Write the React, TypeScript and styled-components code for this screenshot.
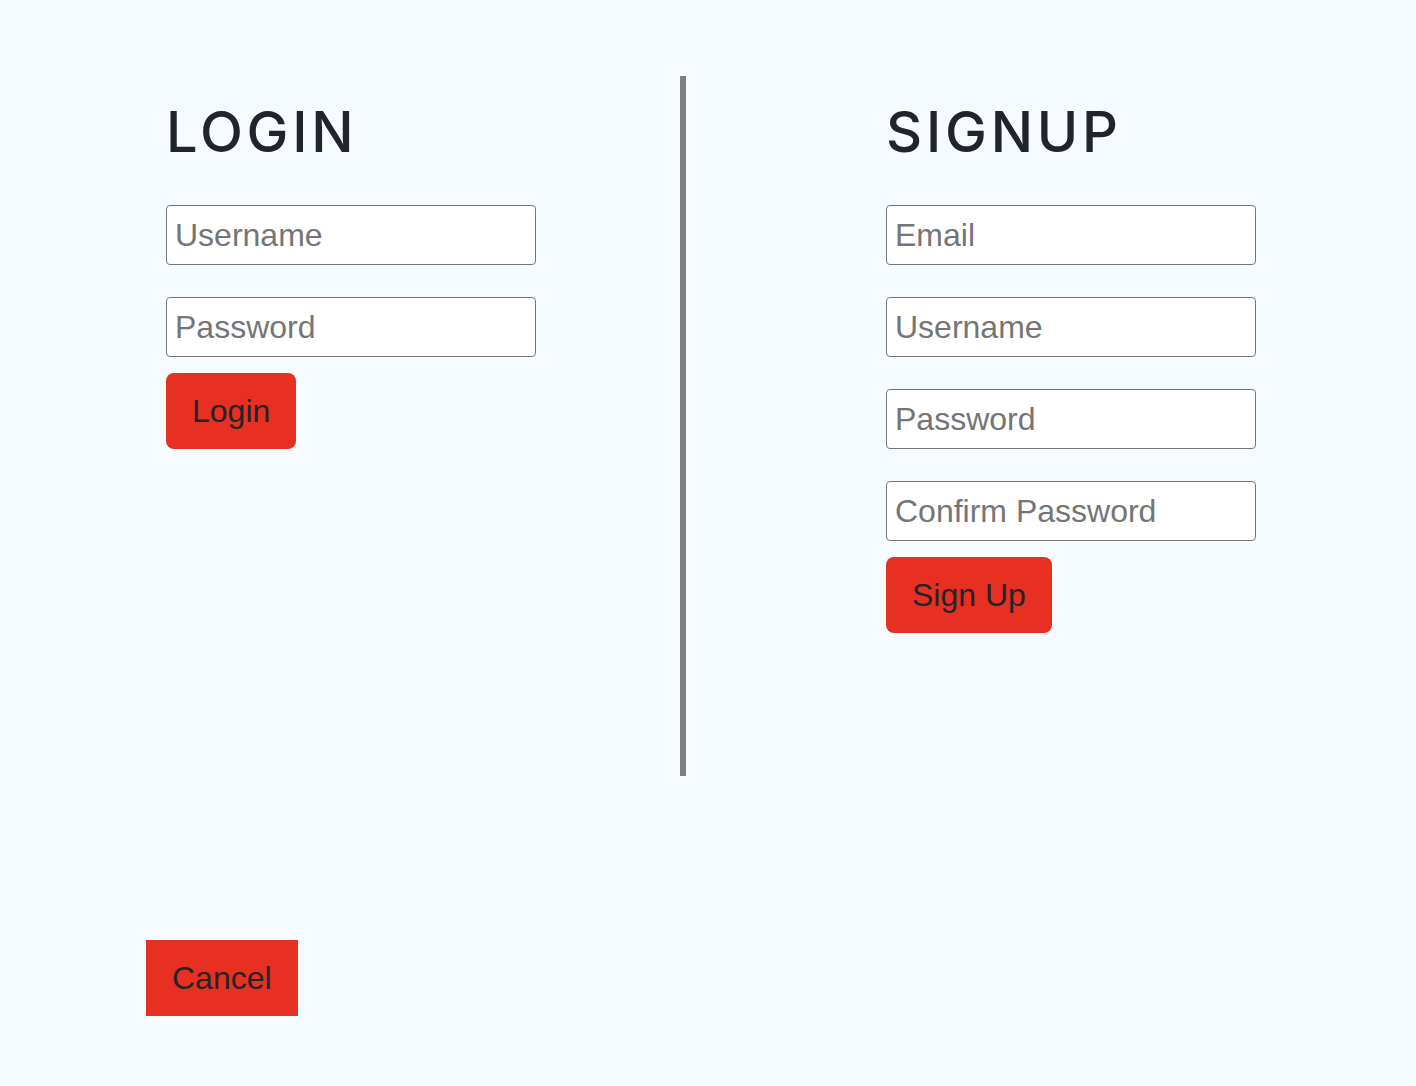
import styled, { createGlobalStyle } from 'styled-components';

const GlobalStyle = createGlobalStyle`
  html, body {
    margin: 0;
    padding: 0;
    background-color: #f5fbff;
  }
  body {
    font-family: 'Liberation Sans', Arial, sans-serif;
    color: #212529;
  }
`;

function App() {
  return (
    <StPage>
      <GlobalStyle />
      <StColumns>
        <StLoginColumn>
          <StTitle>LOGIN</StTitle>
          <StForm>
            <StInput type="text" placeholder="Username" />
            <StInput type="password" placeholder="Password" />
          </StForm>
          <StButton type="button">Login</StButton>
        </StLoginColumn>
        <StDivider />
        <StSignupColumn>
          <StTitle>SIGNUP</StTitle>
          <StForm>
            <StInput type="email" placeholder="Email" />
            <StInput type="text" placeholder="Username" />
            <StInput type="password" placeholder="Password" />
            <StInput type="password" placeholder="Confirm Password" />
          </StForm>
          <StButton type="button">Sign Up</StButton>
        </StSignupColumn>
      </StColumns>
      <StCancelButton type="button">Cancel</StCancelButton>
    </StPage>
  );
}

export default App;

const StPage = styled.div`
  display: flex;
  flex-direction: column;
  align-items: flex-start;
  min-height: 1086px;
  padding-top: 76px;
  box-sizing: border-box;
`;

const StColumns = styled.div`
  display: flex;
  align-items: flex-start;
`;

const StLoginColumn = styled.div`
  display: flex;
  flex-direction: column;
  align-items: flex-start;
  width: 680px;
  padding-left: 166px;
  box-sizing: border-box;
  flex-shrink: 0;
`;

const StSignupColumn = styled.div`
  display: flex;
  flex-direction: column;
  align-items: flex-start;
  padding-left: 200px;
`;

const StDivider = styled.div`
  width: 6px;
  height: 700px;
  flex-shrink: 0;
  background-color: #808080;
`;

const StTitle = styled.h1`
  margin: 23px 0 39px 0;
  font-family: Inter, 'Liberation Sans', Arial, sans-serif;
  font-size: 56px;
  font-weight: 500;
  line-height: 1.2;
  letter-spacing: 3.8px;
  color: #212529;
`;

const StForm = styled.div`
  display: flex;
  flex-direction: column;
  gap: 32px;
`;

const StInput = styled.input`
  width: 370px;
  height: 60px;
  padding: 0 8px;
  box-sizing: border-box;
  border: 1.5px solid #767676;
  border-radius: 4px;
  background-color: #ffffff;
  font-family: 'Liberation Sans', Arial, sans-serif;
  font-size: 32px;
  color: #212529;
  outline: none;

  &::placeholder {
    color: #757575;
  }
`;

const StButton = styled.button`
  margin-top: 16px;
  height: 76px;
  padding: 0 26px;
  border: none;
  border-radius: 8px;
  background-color: #e83022;
  font-family: 'Liberation Sans', Arial, sans-serif;
  font-size: 32px;
  color: #212529;
  cursor: pointer;
`;

const StCancelButton = styled(StButton)`
  margin: 164px 0 0 146px;
  border-radius: 0;
`;
